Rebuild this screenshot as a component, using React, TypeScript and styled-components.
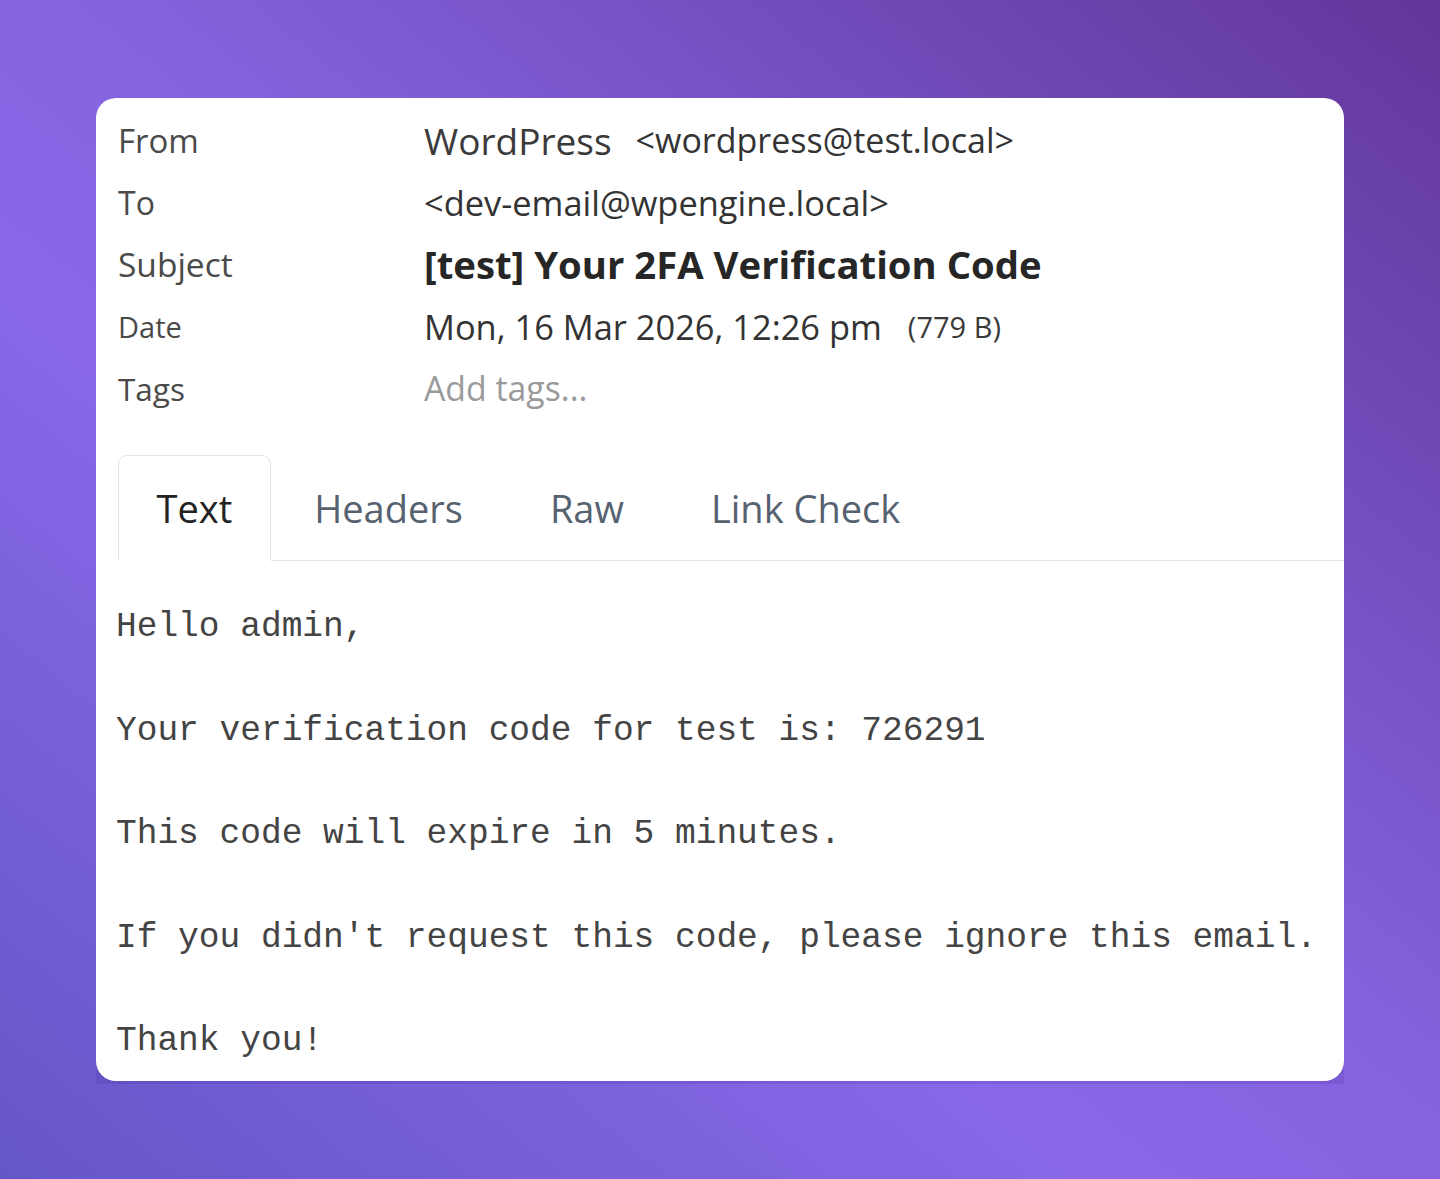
import React from "react";
import styled, { createGlobalStyle } from "styled-components";

const Global = createGlobalStyle`
  html, body { margin: 0; padding: 0; }
  body { font-family: "Open Sans", "Noto Sans", Arial, sans-serif; }
`;

const Page = styled.div`
  width: 1440px;
  height: 1179px;
  box-sizing: border-box;
  padding: 98px 0 0 96px;
  overflow: hidden;
  background: linear-gradient(to top right, #6556c8 0%, #8868e8 38%, #8262dc 55%, #62369a 100%);
`;

const Frame = styled.div`
  width: 1248px;
  padding-bottom: 3px;
  background: rgba(60, 20, 120, 0.12);
  border-radius: 20px 20px 0 0;
`;

const Card = styled.div`
  height: 983px;
  box-sizing: border-box;
  background: #ffffff;
  border-radius: 20px;
  overflow: hidden;
  padding-top: 11px;
`;

const Meta = styled.div`
  display: grid;
  grid-template-columns: 306px 1fr;
  grid-auto-rows: 62px;
  padding-left: 22px;
`;

const Label = styled.div<{ $size?: number }>`
  display: flex;
  align-items: center;
  font-size: ${(p) => p.$size ?? 32}px;
  color: #4a4a4a;
  white-space: nowrap;
`;

const Value = styled.div`
  display: flex;
  align-items: center;
  gap: 24px;
  font-size: 34.4px;
  color: #333;
  white-space: nowrap;
`;

const Sender = styled.span`
  font-size: 37px;
  color: #3a3a3a;
`;

const Email = styled.span`
  font-size: 34px;
`;

const Subject = styled.span`
  font-size: 38.3px;
  font-weight: 700;
  color: #262626;
`;

const Size = styled.span`
  font-size: 29px;
  color: #3a3a3a;
  margin-left: 2px;
`;

const Muted = styled.span`
  font-size: 33.8px;
  color: #9a9a9a;
`;

const Tabs = styled.div`
  display: flex;
  margin-top: 36px;
  padding-left: 22px;
  height: 106px;
  box-sizing: border-box;
`;

const Tab = styled.div<{ $active?: boolean }>`
  display: flex;
  align-items: center;
  justify-content: center;
  padding: 0 ${(p) => (p.$active ? 37.5 : 42.5)}px;
  font-size: 38px;
  color: ${(p) => (p.$active ? "#232323" : "#566270")};
  box-sizing: border-box;
  border: 1.5px solid ${(p) => (p.$active ? "#e1e4e8" : "transparent")};
  border-bottom: 1.5px solid ${(p) => (p.$active ? "transparent" : "#e1e4e8")};
  border-radius: ${(p) => (p.$active ? "9px 9px 0 0" : "0")};
`;

const TabFill = styled.div`
  flex: 1;
  border-bottom: 1.5px solid #e1e4e8;
`;

const Body = styled.pre`
  margin: 0;
  padding: 40px 0 0 20px;
  font-family: "Liberation Mono", "Courier New", monospace;
  font-size: 34.5px;
  line-height: 51.8px;
  color: #444;
`;

const text = `Hello admin,

Your verification code for test is: 726291

This code will expire in 5 minutes.

If you didn't request this code, please ignore this email.

Thank you!`;

export default function App() {
  return (
    <>
      <Global />
      <Page>
        <Frame>
          <Card>
            <Meta>
              <Label $size={33}>From</Label>
              <Value>
                <Sender>WordPress</Sender>
                <Email>&lt;wordpress@test.local&gt;</Email>
              </Value>
              <Label>To</Label>
              <Value>&lt;dev-email@wpengine.local&gt;</Value>
              <Label $size={33.5}>Subject</Label>
              <Value>
                <Subject>[test] Your 2FA Verification Code</Subject>
              </Value>
              <Label $size={29}>Date</Label>
              <Value>
                Mon, 16 Mar 2026, 12:26 pm
                <Size>(779 B)</Size>
              </Value>
              <Label $size={31.5}>Tags</Label>
              <Value>
                <Muted>Add tags...</Muted>
              </Value>
            </Meta>
            <Tabs>
              <Tab $active>Text</Tab>
              <Tab>Headers</Tab>
              <Tab>Raw</Tab>
              <Tab>Link Check</Tab>
              <TabFill />
            </Tabs>
            <Body>{text}</Body>
          </Card>
        </Frame>
      </Page>
    </>
  );
}
